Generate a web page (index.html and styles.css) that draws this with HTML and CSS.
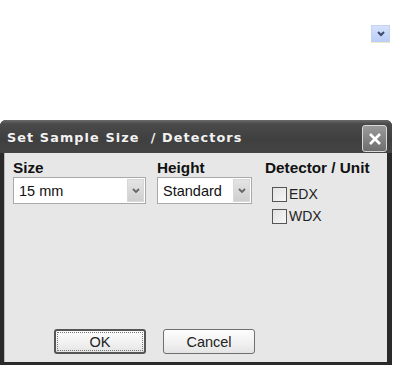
FILE: index.html
```html
<!DOCTYPE html>
<html lang="en">
  <head>
    <meta charset="utf-8" />
    <title>Set Sample Size / Detectors</title>
    <link rel="stylesheet" href="styles.css">
  </head>
  <body>
    <div class="top">
      <div class="mini-drop">
        <svg width="8" height="6" viewBox="0 0 8 6"><path d="M1 1 L4 4 L7 1" fill="none" stroke="#3b4a6b" stroke-width="2"/></svg>
      </div>
    </div>

    <div class="dialog">
      <div class="titlebar">
        <span class="title">Set Sample Size &nbsp;/ Detectors</span>
        <div class="close">
          <svg width="14" height="14" viewBox="0 0 14 14"><path d="M2 2 L12 12 M12 2 L2 12" stroke="#fff" stroke-width="2.6"/></svg>
        </div>
      </div>

      <div class="content">
        <div class="fields">
          <div class="col col-size">
            <div class="label">Size</div>
            <div class="select">
              <span class="value">15 mm</span>
              <span class="drop"><svg width="8" height="6" viewBox="0 0 8 6"><path d="M1 1 L4 4 L7 1" fill="none" stroke="#666" stroke-width="1.8"/></svg></span>
            </div>
          </div>
          <div class="col col-height">
            <div class="label">Height</div>
            <div class="select">
              <span class="value">Standard</span>
              <span class="drop"><svg width="8" height="6" viewBox="0 0 8 6"><path d="M1 1 L4 4 L7 1" fill="none" stroke="#666" stroke-width="1.8"/></svg></span>
            </div>
          </div>
          <div class="col col-det">
            <div class="label">Detector / Unit</div>
            <div class="checks">
              <label class="check"><span class="box"></span>EDX</label>
              <label class="check"><span class="box"></span>WDX</label>
            </div>
          </div>
        </div>

        <div class="buttons">
          <button class="btn btn-default"><span>OK</span></button>
          <button class="btn">Cancel</button>
        </div>
      </div>
    </div>
  </body>
</html>
```

FILE: styles.css
```css
body {
  margin: 0;
  background: #fff;
  font-family: "Liberation Sans", Arial, sans-serif;
  width: 393px;
  height: 365px;
  overflow: hidden;
}

.top {
  height: 120px;
  display: flex;
  justify-content: flex-end;
}

.mini-drop {
  margin-top: 25px;
  margin-right: 3px;
  width: 17px;
  height: 16px;
  background: linear-gradient(#d6e2fb, #b9cdf7);
  border: 1px solid #c6d3ee;
  border-bottom: 1px solid #efe9c9;
  display: flex;
  align-items: center;
  justify-content: center;
}

.dialog {
  height: 245px;
  display: flex;
  flex-direction: column;
  background: #2a2a2a;
  border-radius: 6px 6px 0 0;
  margin-right: 1px;
}

.titlebar {
  height: 33px;
  display: flex;
  align-items: center;
  justify-content: space-between;
  padding: 0 5px 0 7px;
  border-radius: 6px 6px 0 0;
  background: linear-gradient(#6a6a6a, #4a4a4a 12%, #3f3f3f 60%, #454545);
}

.title {
  font-family: "DejaVu Sans", sans-serif;
  font-weight: bold;
  font-size: 12.8px;
  letter-spacing: 1.1px;
  color: #f2f2f2;
  padding-top: 2px;
}

.close {
  width: 23px;
  height: 25px;
  border: 1px solid #d8d8d8;
  border-radius: 3px;
  background: linear-gradient(#9a9a9a, #6e6e6e);
  display: flex;
  align-items: center;
  justify-content: center;
  margin-top: 4px;
}

.content {
  flex: 1;
  background: #e7e7e7;
  margin: 0 5px 3px 4px;
  border-left: 1px solid #b8b8b8;
  display: flex;
  flex-direction: column;
  padding: 6px 0 8px 8px;
}

.fields {
  display: flex;
}

.label {
  font-weight: bold;
  font-size: 15.3px;
  line-height: 17px;
  color: #111;
  margin-bottom: 1px;
}

.col-size { width: 133px; margin-right: 11px; }
.col-height { width: 95px; margin-right: 13px; }

.select {
  height: 25px;
  background: #fff;
  border: 1px solid #a9a9a9;
  display: flex;
  align-items: center;
  justify-content: space-between;
  padding: 0 1px 0 5px;
  font-size: 14.5px;
  color: #111;
}

.drop {
  width: 17px;
  height: 23px;
  background: linear-gradient(#e4e4e4, #cfcfcf);
  border: 1px solid #d8d8d8;
  box-sizing: border-box;
  display: flex;
  align-items: center;
  justify-content: center;
}

.checks {
  display: flex;
  flex-direction: column;
  gap: 7px;
  padding: 10px 0 0 7px;
}

.check {
  display: flex;
  align-items: center;
  font-size: 14px;
  line-height: 15px;
  color: #222;
}

.box {
  width: 13px;
  height: 13px;
  border: 1px solid #555;
  background: linear-gradient(135deg, #e2e2e2, #f6f6f6);
  margin-right: 2px;
}

.buttons {
  margin-top: auto;
  display: flex;
  gap: 17px;
  padding-left: 41px;
}

.btn {
  width: 92px;
  height: 25px;
  font-family: "Liberation Sans", Arial, sans-serif;
  font-size: 14.5px;
  color: #222;
  background: linear-gradient(#fdfdfd, #f0f0f0 60%, #e4e4e4);
  border: 1px solid #6f6f6f;
  border-radius: 3px;
  padding: 0;
}

.btn-default {
  border: 2px solid #555;
  padding: 1px;
}

.btn-default span {
  display: flex;
  align-items: center;
  justify-content: center;
  height: 100%;
  border: 1px dotted #777;
  box-sizing: border-box;
}
```
